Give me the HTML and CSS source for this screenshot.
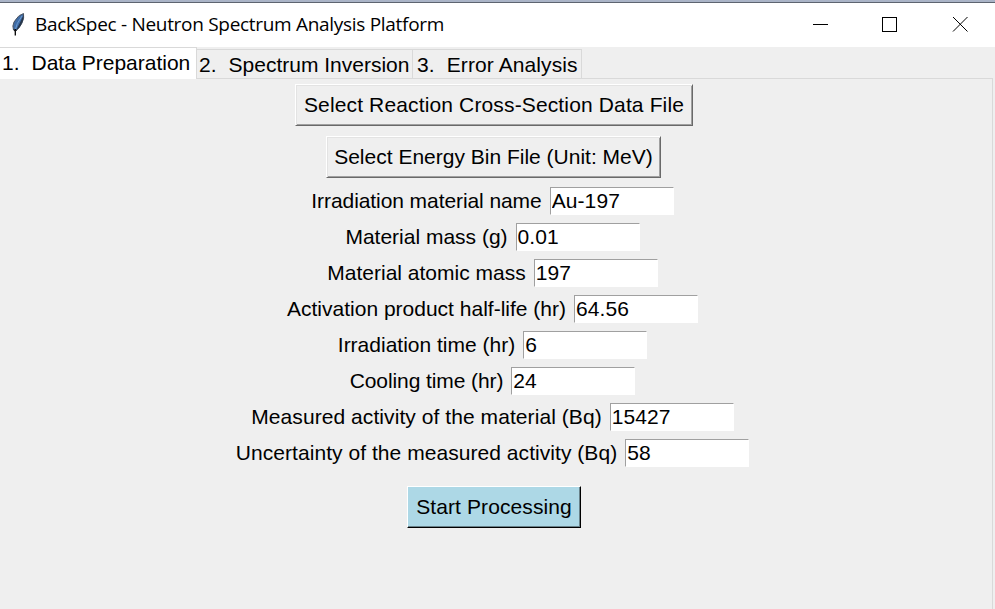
FILE: index.html
```html
<!DOCTYPE html>
<html lang="en">
<head>
<meta charset="utf-8">
<title>BackSpec - Neutron Spectrum Analysis Platform</title>
<link rel="stylesheet" href="styles.css">
</head>
<body>
<div class="window">
  <header class="titlebar">
    <svg class="feather" width="14" height="24" viewBox="0 0 14 24">
      <path d="M12.500 1.500Q7 3 3 10Q1 14 2.500 18L4.500 19Q8 17 11 11Q13.500 6 12.500 1.500Z" fill="#3f6ca6" stroke="#4c5460"/>
      <path d="M12.500 3Q13 8 10 13Q7.500 17 5 18.500Q9 11 12.500 3Z" fill="#27364b"/>
      <path d="M11 4Q5 12 4.200 18" fill="none" stroke="#6c9bd0"/>
      <path d="M4.300 17V23.500" fill="none" stroke="#000" stroke-width="1.300"/>
      <path d="M2.500 17.500L4.300 20L6 18" fill="#111"/>
    </svg>
    <h1 class="title">BackSpec - Neutron Spectrum Analysis Platform</h1>
    <svg class="controls" width="160" height="20" viewBox="0 0 160 20" fill="none" stroke="#000" stroke-width="1">
      <path d="M1 9.500H16"/>
      <rect x="70.500" y="2.500" width="14" height="14"/>
      <path d="M141 2L155.500 16.500M155.500 2L141 16.500"/>
    </svg>
  </header>
  <nav class="tabs">
    <div class="tab active"><span>1.</span><span>Data Preparation</span></div>
    <div class="tab inversion"><span>2.</span><span>Spectrum Inversion</span></div>
    <div class="tab error"><span>3.</span><span>Error Analysis</span></div>
  </nav>
  <main class="pane">
    <button class="button reaction">Select Reaction Cross-Section Data File</button>
    <button class="button energy">Select Energy Bin File (Unit: MeV)</button>
    <form class="fields">
      <label class="row name"><span>Irradiation material name</span><input value="Au-197"></label>
      <label class="row"><span>Material mass (g)</span><input value="0.01"></label>
      <label class="row"><span>Material atomic mass</span><input value="197"></label>
      <label class="row"><span>Activation product half-life (hr)</span><input value="64.56"></label>
      <label class="row"><span>Irradiation time (hr)</span><input value="6"></label>
      <label class="row cooling"><span>Cooling time (hr)</span><input value="24"></label>
      <label class="row activity"><span>Measured activity of the material (Bq)</span><input value="15427"></label>
      <label class="row uncertainty"><span>Uncertainty of the measured activity (Bq)</span><input value="58"></label>
    </form>
    <button class="button start">Start Processing</button>
  </main>
</div>
</body>
</html>
```
FILE: styles.css
```css
* { box-sizing: border-box; }
body { margin: 0; overflow: hidden; background: #efefef; }
.window {
  width: 995px;
  height: 609px;
  display: flex;
  flex-direction: column;
  font: 21px/24px "Liberation Sans", Arial, sans-serif;
  color: #000;
}
.titlebar {
  height: 47px;
  flex: none;
  display: flex;
  align-items: center;
  background: #fff;
  border-top: 2px solid #aab4c7;
  box-shadow: inset 0 1px #5d6470;
  padding: 0 23px 0 11px;
}
.feather { flex: none; margin-top: -2px; }
.title {
  margin: -1px auto 0 10px;
  font: 400 19px/26px "Open Sans", "Noto Sans", sans-serif;
  white-space: nowrap;
  letter-spacing: -0.300px;
}
.tabs { height: 31px; flex: none; display: flex; align-items: flex-end; }
.tab {
  height: 29px;
  display: flex;
  gap: 12px;
  padding: 3px 2px 0;
  white-space: nowrap;
  border: 1px solid #d9d9d9;
  border-left: 0;
  border-bottom: 0;
}
.active {
  width: 197px;
  height: 32px;
  margin-bottom: -1px;
  background: #fff;
  z-index: 1;
}
.inversion { width: 216px; }
.error { width: 169px; padding-left: 4px; letter-spacing: 0.100px; }
.pane {
  width: 993px;
  flex: 1;
  padding: 5px 4px 0 0;
  border: 1px solid #d9d9d9;
  border-width: 1px 1px 0 0;
  display: flex;
  flex-direction: column;
  align-items: center;
}
.button {
  height: 42px;
  flex: none;
  padding: 0;
  font: inherit;
  color: #000;
  white-space: nowrap;
  background: #efefef;
  border: 1px solid;
  border-color: #fff #696969 #696969 #fff;
  border-radius: 0;
  box-shadow: inset 1px 1px #e3e3e3, inset -1px -1px #a0a0a0;
}
.reaction { width: 398px; letter-spacing: 0.140px; }
.energy { width: 335px; margin: 10px 1px 0 0; }
.start {
  width: 174px;
  margin-top: 19px;
  letter-spacing: 0.100px;
  background: #add8e6;
  border-color: #fff #000 #000 #fff;
  box-shadow: inset -1px -1px #688189;
}
.fields { margin: 9px 3px 0 0; display: flex; flex-direction: column; gap: 8px; align-items: center; }
.row { height: 28px; display: flex; align-items: center; gap: 8px; white-space: nowrap; }
.name { letter-spacing: -0.080px; }
.cooling { letter-spacing: -0.090px; }
.activity { letter-spacing: 0.070px; }
.uncertainty { letter-spacing: 0.050px; }
.row input {
  width: 124px;
  height: 28px;
  padding: 0 0 0 1px;
  font: inherit;
  letter-spacing: 0.100px;
  color: #000;
  background: #fff;
  border: 1px solid;
  border-color: #a0a0a0 #fff #fff #a0a0a0;
  outline: 0;
}
```
